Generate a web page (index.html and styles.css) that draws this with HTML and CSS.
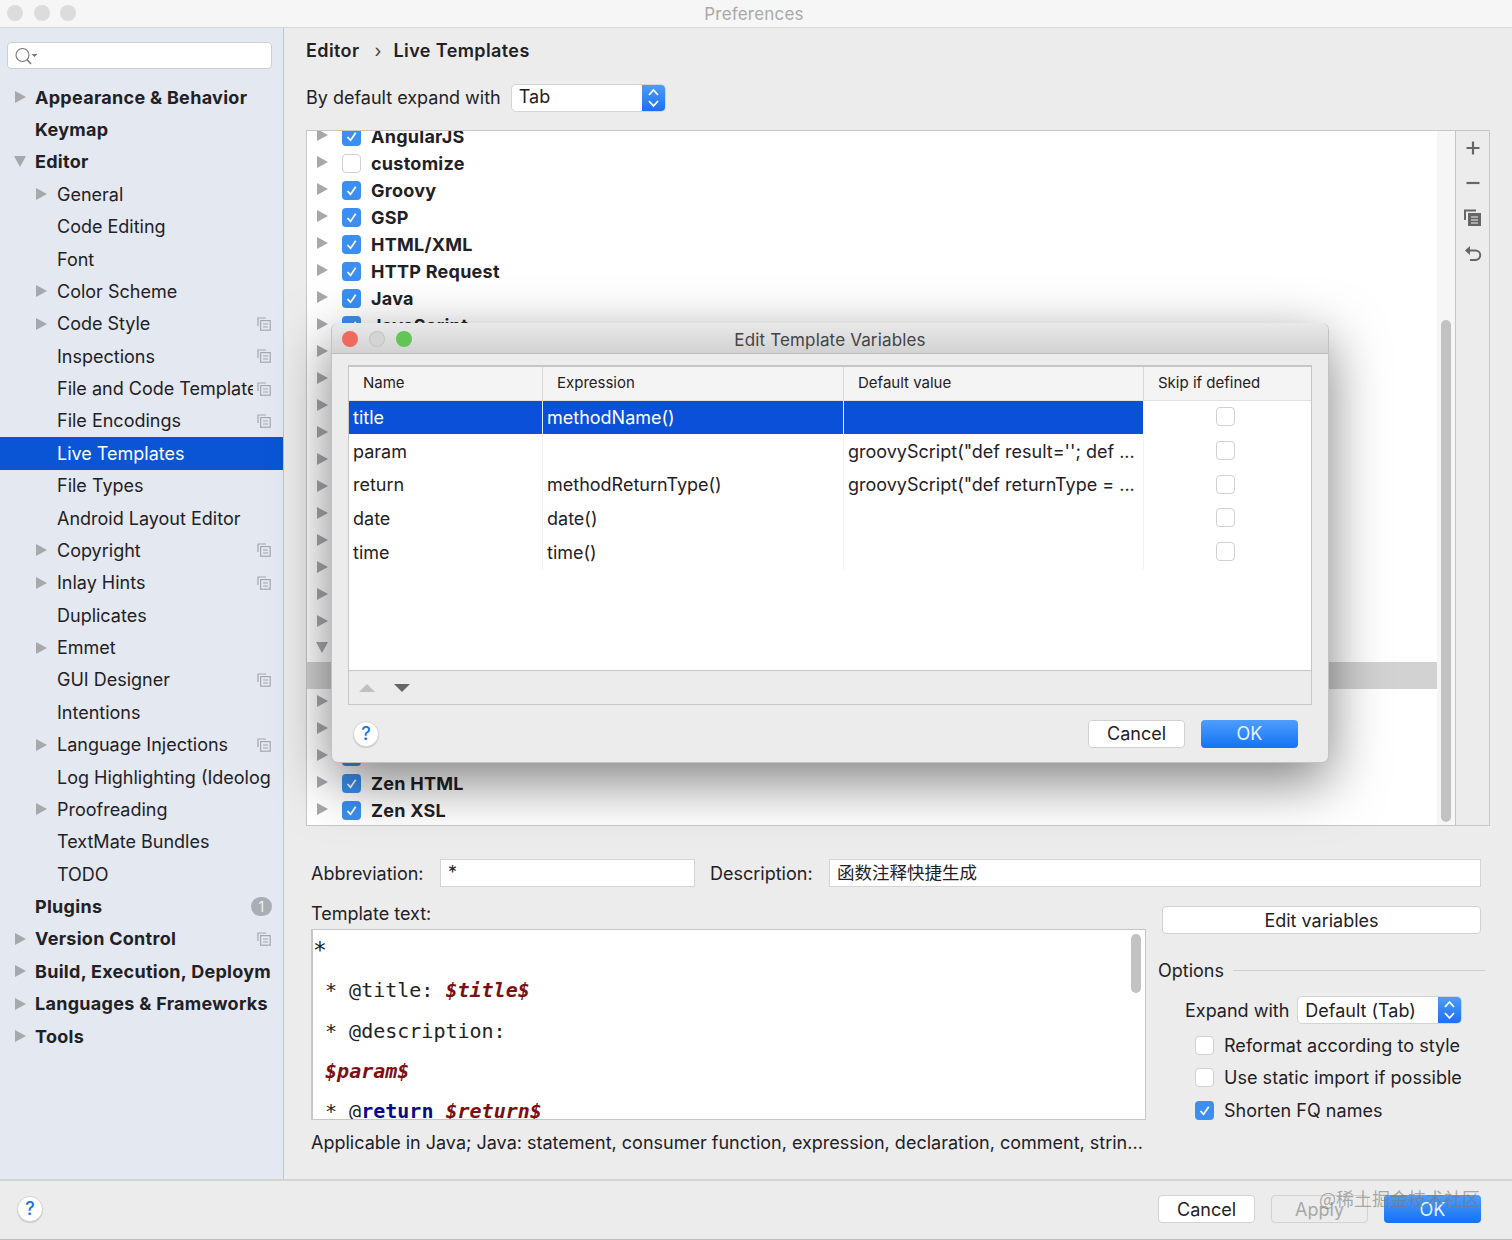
FILE: index.html
```html
<!DOCTYPE html>
<html lang="en">
<head>
<meta charset="UTF-8" />
<title>Preferences</title>
<link rel="stylesheet" href="styles.css">
</head>
<body>

<svg class="defs" width="0" height="0">
  <symbol id="copy" viewBox="0 0 14 14">
    <path d="M1 9V1h8" fill="none" stroke="currentColor" stroke-width="1.2"/>
    <rect x="3.6" y="3.6" width="9.6" height="9.6" fill="none" stroke="currentColor" stroke-width="1.2"/>
    <path d="M6 7h5M6 10h5" stroke="currentColor" stroke-width="1.2"/>
  </symbol>
  <symbol id="check" viewBox="0 0 19 19">
    <path d="M5.5 10l3 3.4 5.2-7.6" fill="none" stroke="#fff" stroke-width="1.8"/>
  </symbol>
  <symbol id="updown" viewBox="0 0 23 28">
    <path d="M7 11l4.5-5 4.5 5M7 17l4.5 5 4.5-5" fill="none" stroke="#fff" stroke-width="1.8"/>
  </symbol>
</svg>

<div class="window">
  <div class="titlebar">
    <div class="lights">
      <span class="light"></span><span class="light"></span><span class="light"></span>
    </div>
    Preferences
  </div>

  <div class="main">
    <!-- left tree -->
    <div class="sidebar">
      <div class="search">
        <svg width="24" height="20" viewBox="0 0 24 20">
          <circle cx="8.500" cy="9" r="6.500" fill="none" stroke="#777" stroke-width="1.100"/>
          <path d="M13 13.500l4 4.500" stroke="#777" stroke-width="1.500"/>
          <path d="M17.500 8h6l-3 3z" fill="#777"/>
        </svg>
      </div>
      <div class="nav">
        <div class="nav-item top"><span class="arrow"></span><span class="nav-label">Appearance &amp; Behavior</span></div>
        <div class="nav-item top"><span class="arrow none"></span><span class="nav-label">Keymap</span></div>
        <div class="nav-item top"><span class="arrow down"></span><span class="nav-label">Editor</span></div>
        <div class="nav-item"><span class="arrow"></span><span class="nav-label">General</span></div>
        <div class="nav-item"><span class="arrow none"></span><span class="nav-label">Code Editing</span></div>
        <div class="nav-item"><span class="arrow none"></span><span class="nav-label">Font</span></div>
        <div class="nav-item"><span class="arrow"></span><span class="nav-label">Color Scheme</span></div>
        <div class="nav-item"><span class="arrow"></span><span class="nav-label">Code Style</span><svg class="copy"><use href="#copy"/></svg></div>
        <div class="nav-item"><span class="arrow none"></span><span class="nav-label">Inspections</span><svg class="copy"><use href="#copy"/></svg></div>
        <div class="nav-item"><span class="arrow none"></span><span class="nav-label">File and Code Templates</span><svg class="copy"><use href="#copy"/></svg></div>
        <div class="nav-item"><span class="arrow none"></span><span class="nav-label">File Encodings</span><svg class="copy"><use href="#copy"/></svg></div>
        <div class="nav-item selected"><span class="arrow none"></span><span class="nav-label">Live Templates</span></div>
        <div class="nav-item"><span class="arrow none"></span><span class="nav-label">File Types</span></div>
        <div class="nav-item"><span class="arrow none"></span><span class="nav-label">Android Layout Editor</span></div>
        <div class="nav-item"><span class="arrow"></span><span class="nav-label">Copyright</span><svg class="copy"><use href="#copy"/></svg></div>
        <div class="nav-item"><span class="arrow"></span><span class="nav-label">Inlay Hints</span><svg class="copy"><use href="#copy"/></svg></div>
        <div class="nav-item"><span class="arrow none"></span><span class="nav-label">Duplicates</span></div>
        <div class="nav-item"><span class="arrow"></span><span class="nav-label">Emmet</span></div>
        <div class="nav-item"><span class="arrow none"></span><span class="nav-label">GUI Designer</span><svg class="copy"><use href="#copy"/></svg></div>
        <div class="nav-item"><span class="arrow none"></span><span class="nav-label">Intentions</span></div>
        <div class="nav-item"><span class="arrow"></span><span class="nav-label">Language Injections</span><svg class="copy"><use href="#copy"/></svg></div>
        <div class="nav-item"><span class="arrow none"></span><span class="nav-label">Log Highlighting (Ideolog)</span></div>
        <div class="nav-item"><span class="arrow"></span><span class="nav-label">Proofreading</span></div>
        <div class="nav-item"><span class="arrow none"></span><span class="nav-label">TextMate Bundles</span></div>
        <div class="nav-item"><span class="arrow none"></span><span class="nav-label">TODO</span></div>
        <div class="nav-item top"><span class="arrow none"></span><span class="nav-label">Plugins</span><span class="badge">1</span></div>
        <div class="nav-item top"><span class="arrow"></span><span class="nav-label">Version Control</span><svg class="copy"><use href="#copy"/></svg></div>
        <div class="nav-item top"><span class="arrow"></span><span class="nav-label">Build, Execution, Deployment</span></div>
        <div class="nav-item top"><span class="arrow"></span><span class="nav-label">Languages &amp; Frameworks</span></div>
        <div class="nav-item top"><span class="arrow"></span><span class="nav-label">Tools</span></div>
      </div>
    </div>

    <div class="content">
      <div class="crumbs"><b>Editor</b><span class="crumb-sep">›</span><b>Live Templates</b></div>

      <div class="expand-row">
        By default expand with
        <div class="select tab-select"><span class="select-text">Tab</span><svg class="select-btn"><use href="#updown"/></svg></div>
      </div>

      <div class="list-box">
        <div class="list">
          <div class="list-rows">
            <div class="row"><span class="arrow"></span><span class="cb on"><svg><use href="#check"/></svg></span>AngularJS</div>
            <div class="row"><span class="arrow"></span><span class="cb"></span>customize</div>
            <div class="row"><span class="arrow"></span><span class="cb on"><svg><use href="#check"/></svg></span>Groovy</div>
            <div class="row"><span class="arrow"></span><span class="cb on"><svg><use href="#check"/></svg></span>GSP</div>
            <div class="row"><span class="arrow"></span><span class="cb on"><svg><use href="#check"/></svg></span>HTML/XML</div>
            <div class="row"><span class="arrow"></span><span class="cb on"><svg><use href="#check"/></svg></span>HTTP Request</div>
            <div class="row"><span class="arrow"></span><span class="cb on"><svg><use href="#check"/></svg></span>Java</div>
            <div class="row"><span class="arrow"></span><span class="cb on"><svg><use href="#check"/></svg></span>JavaScript</div>
            <div class="row"><span class="arrow"></span></div>
            <div class="row"><span class="arrow"></span></div>
            <div class="row"><span class="arrow"></span></div>
            <div class="row"><span class="arrow"></span></div>
            <div class="row"><span class="arrow"></span></div>
            <div class="row"><span class="arrow"></span></div>
            <div class="row"><span class="arrow"></span></div>
            <div class="row"><span class="arrow"></span></div>
            <div class="row"><span class="arrow"></span></div>
            <div class="row"><span class="arrow"></span></div>
            <div class="row"><span class="arrow"></span></div>
            <div class="row"><span class="arrow down"></span></div>
            <div class="row picked"></div>
            <div class="row"><span class="arrow"></span></div>
            <div class="row"><span class="arrow"></span></div>
            <div class="row"><span class="arrow"></span><span class="cb on"><svg><use href="#check"/></svg></span>XML</div>
            <div class="row"><span class="arrow"></span><span class="cb on"><svg><use href="#check"/></svg></span>Zen HTML</div>
            <div class="row"><span class="arrow"></span><span class="cb on"><svg><use href="#check"/></svg></span>Zen XSL</div>
          </div>
          <div class="list-track"><div class="list-thumb"></div></div>
        </div>
        <div class="list-tools">
          <svg width="16" height="16" viewBox="0 0 16 16"><path d="M8 1.500v13M1.500 8h13" stroke="#666" stroke-width="2.200"/></svg>
          <svg width="16" height="16" viewBox="0 0 16 16"><path d="M1.500 8h13" stroke="#666" stroke-width="2.200"/></svg>
          <svg width="18" height="18" viewBox="0 0 18 18"><path d="M1 11V1.500h11" fill="none" stroke="#666" stroke-width="2"/><rect x="4" y="4" width="13" height="13" fill="#666"/><path d="M7 8h7M7 11h7M7 14h7" stroke="#eee" stroke-width="1.200"/></svg>
          <svg width="18" height="18" viewBox="0 0 18 18"><path d="M2 5.500h9.500a4.700 4.700 0 0 1 0 9.500H6" fill="none" stroke="#666" stroke-width="2"/><path d="M6 1L1 5.500 6 10z" fill="#666"/></svg>
        </div>
      </div>

      <div class="abbr-row">
        <label class="abbr-label">Abbreviation:</label>
        <div class="input abbr-input">*</div>
        <label class="desc-label">Description:</label>
        <div class="input desc-input">函数注释快捷生成</div>
      </div>

      <div class="template">
        <div class="template-left">
          <div class="template-label">Template text:</div>
          <div class="editor">
            <div class="code">
              <div class="first">*</div>
              <div> * @title: <i>$title$</i></div>
              <div> * @description:</div>
              <div> <i>$param$</i></div>
              <div> * @<span class="kw">return</span> <i>$return$</i></div>
            </div>
            <div class="editor-thumb"></div>
          </div>
          <div class="applicable">Applicable in Java; Java: statement, consumer function, expression, declaration, comment, strin...</div>
        </div>

        <div class="template-right">
          <button class="button wide">Edit variables</button>
          <div class="options-head">Options<span class="options-line"></span></div>
          <div class="expand-with">
            Expand with
            <div class="select with-select"><span class="select-text">Default (Tab)</span><svg class="select-btn"><use href="#updown"/></svg></div>
          </div>
          <div class="option"><span class="cb"></span>Reformat according to style</div>
          <div class="option"><span class="cb"></span>Use static import if possible</div>
          <div class="option"><span class="cb on"><svg><use href="#check"/></svg></span>Shorten FQ names</div>
        </div>
      </div>
    </div>
  </div>

  <div class="footer">
    <span class="help">?</span>
    <div class="footer-btns">
      <button class="button">Cancel</button>
      <button class="button disabled">Apply</button>
      <button class="button primary">OK</button>
    </div>
  </div>

  <!-- modal over the preferences -->
  <div class="dialog">
    <div class="dialog-title">
      <div class="lights">
        <span class="light red"></span><span class="light"></span><span class="light green"></span>
      </div>
      Edit Template Variables
    </div>
    <div class="vars">
      <div class="vars-row vars-head">
        <div>Name</div><div>Expression</div><div>Default value</div><div>Skip if defined</div>
      </div>
      <div class="vars-row vars-sel">
        <div>title</div><div>methodName()</div><div></div><div class="skip"><span class="cb"></span></div>
      </div>
      <div class="vars-row">
        <div>param</div><div></div><div>groovyScript("def result=''; def ...</div><div class="skip"><span class="cb"></span></div>
      </div>
      <div class="vars-row">
        <div>return</div><div>methodReturnType()</div><div>groovyScript("def returnType = ...</div><div class="skip"><span class="cb"></span></div>
      </div>
      <div class="vars-row">
        <div>date</div><div>date()</div><div></div><div class="skip"><span class="cb"></span></div>
      </div>
      <div class="vars-row">
        <div>time</div><div>time()</div><div></div><div class="skip"><span class="cb"></span></div>
      </div>
      <div class="vars-empty"></div>
      <div class="vars-tools">
        <span class="tri-up"></span><span class="tri-down"></span>
      </div>
    </div>
    <div class="dialog-foot">
      <span class="help">?</span>
      <div class="dialog-btns">
        <button class="button">Cancel</button>
        <button class="button primary">OK</button>
      </div>
    </div>
  </div>

  <div class="watermark">@稀土掘金技术社区</div>
</div>

</body>
</html>
```

FILE: styles.css
```css
html, body {
  margin: 0;
  height: 1240px;
  overflow: hidden;
}
body {
  font-family: Inter, "Noto Sans CJK SC", sans-serif;
  font-size: 18px;
  color: #1f2126;
  background: #ececec;
}
.defs {
  display: block;
  height: 0;
}
.window {
  position: relative;
  width: 1512px;
  height: 1240px;
  display: flex;
  flex-direction: column;
}

/* title bar */
.titlebar {
  position: relative;
  height: 27px;
  flex-shrink: 0;
  background: #f6f6f6;
  border-bottom: 1px solid #d8d8d8;
  color: #a9a9a9;
  font-size: 17px;
  letter-spacing: .2px;
  text-align: center;
  line-height: 28px;
  padding-right: 4px;
}
.lights {
  position: absolute;
  left: 7px;
  top: 5px;
  display: flex;
  gap: 10.5px;
}
.light {
  width: 16px;
  height: 16px;
  border-radius: 50%;
  background: #dcdcdc;
}
.light.red { background: #ee6a5f; }
.light.green { background: #62c554; }

.main {
  flex: 1;
  display: flex;
  min-height: 0;
}

/* sidebar */
.sidebar {
  width: 284px;
  flex-shrink: 0;
  box-sizing: border-box;
  background: #e4e8f0;
  border-right: 1px solid #c4c4c4;
  padding-top: 14px;
}
.search {
  height: 27px;
  margin: 0 11px 0 7px;
  box-sizing: border-box;
  background: #fff;
  border: 1px solid #cdcfd4;
  border-radius: 4px;
  padding: 3px 0 0 6px;
}
.search svg {
  display: block;
}
.nav {
  margin-top: 12px;
}
.nav-item {
  height: 32.38px;
  display: flex;
  align-items: center;
  padding: 0 12px 0 36px;
}
.nav-item.top {
  padding-left: 15px;
  font-weight: 700;
  letter-spacing: .29px;
}
.nav-item .arrow {
  margin-right: 10px;
}
.nav-item.top .arrow {
  margin-right: 9px;
}
.nav-label {
  flex: 1;
  min-width: 0;
  overflow: hidden;
  white-space: nowrap;
}
.nav-item.selected {
  background: #0a55d6;
  color: #fff;
}
.copy {
  width: 14px;
  height: 14px;
  flex-shrink: 0;
  margin-left: 4px;
  color: #a4a7ac;
}
.badge {
  width: 21px;
  height: 19px;
  flex-shrink: 0;
  margin-right: -1px;
  border-radius: 10px;
  background: #a9aeb4;
  color: #eef0f3;
  font-size: 14px;
  font-weight: 400;
  line-height: 19px;
  text-align: center;
}

/* tree triangles */
.arrow {
  width: 0;
  height: 0;
  flex-shrink: 0;
  border-style: solid;
  border-width: 6px 0 6px 11px;
  border-color: transparent transparent transparent #a6a8ab;
}
.arrow.down {
  border-width: 11px 6px 0 6px;
  border-color: #a6a8ab transparent transparent transparent;
  margin-left: -1px;
  margin-right: 9px !important;
}
.arrow.none {
  border-color: transparent;
}

/* right side */
.content {
  flex: 1;
  min-width: 0;
  display: flex;
  flex-direction: column;
  padding-left: 22px;
}
.crumbs {
  height: 28px;
  margin-top: 8px;
  display: flex;
  align-items: center;
}
.crumbs b {
  font-weight: 600;
  letter-spacing: .4px;
}
.crumb-sep {
  margin: 0 12px 0 15px;
  color: #444;
}
.expand-row {
  height: 28px;
  margin-top: 19px;
  display: flex;
  align-items: center;
  gap: 10px;
}
.select {
  height: 28px;
  display: flex;
  align-items: center;
  box-sizing: border-box;
  background: #fff;
  border: 1px solid #d4d4d4;
  border-radius: 5px;
  overflow: hidden;
}
.select-text {
  flex: 1;
  padding: 0 0 2px 7px;
}
.select-btn {
  width: 23px;
  height: 28px;
  flex-shrink: 0;
  background: linear-gradient(#4f9dfb, #1a6ff0);
}
.tab-select {
  width: 155px;
  margin-top: 1px;
}
.with-select { width: 165px; }
.with-select .select-text {
  padding-bottom: 0;
}

.list-box {
  height: 696px;
  width: 1184px;
  margin-top: 19px;
  box-sizing: border-box;
  display: flex;
  background: #fff;
  border: 1px solid #c6c6c6;
}
.list {
  flex: 1;
  position: relative;
  overflow: hidden;
}
.list-rows {
  margin-top: -8px;
}
.row {
  height: 26.96px;
  display: flex;
  align-items: center;
  padding-left: 10px;
  font-weight: 700;
  letter-spacing: .26px;
  width: 1130px;
}
.row .arrow {
  margin-right: 14px;
  position: relative;
  top: -1px;
}
.row .cb {
  margin-right: 10px;
}
.row.picked {
  background: #d2d2d2;
}
.cb {
  width: 19px;
  height: 19px;
  flex-shrink: 0;
  box-sizing: border-box;
  display: block;
  background: #fff;
  border: 1px solid #d0d0d0;
  border-radius: 4px;
}
.cb.on {
  background: #3a8ff0;
  border: none;
}
.cb svg {
  display: block;
  width: 19px;
  height: 19px;
}
.list-track {
  position: absolute;
  right: 0;
  top: 0;
  bottom: 0;
  width: 18px;
  background: #f6f6f6;
}
.list-thumb {
  position: absolute;
  left: 4px;
  top: 189px;
  bottom: 3px;
  width: 10px;
  border-radius: 5px;
  background: #c2c2c2;
}
.list-tools {
  width: 33px;
  flex-shrink: 0;
  background: #ececec;
  border-left: 1px solid #c6c6c6;
  display: flex;
  flex-direction: column;
  align-items: center;
  gap: 18px;
  padding-top: 9px;
}
.list-tools svg {
  display: block;
}
.list-tools svg:nth-child(2) {
  margin-top: 1px;
}

.abbr-row {
  height: 28px;
  margin: 33px 0 0 5px;
  display: flex;
  align-items: center;
}
.input {
  height: 28px;
  box-sizing: border-box;
  background: #fff;
  border: 1px solid #d4d4d4;
  line-height: 26px;
  padding-left: 7px;
}
.abbr-label { width: 129px; }
.abbr-input { width: 255px; }
.desc-label {
  margin-left: 15px;
  width: 119px;
}
.desc-input {
  width: 652px;
  font-size: 17.5px;
}

.template {
  flex: 1;
  display: flex;
  margin-left: 5px;
  min-height: 0;
}
.template-left {
  width: 835px;
  flex-shrink: 0;
}
.template-label {
  height: 26px;
  margin-top: 14px;
  line-height: 26px;
}
.editor {
  position: relative;
  height: 191px;
  margin-top: 2px;
  box-sizing: border-box;
  overflow: hidden;
  background: #fff;
  border: 1px solid #c6c6c6;
  border-left-width: 2px;
}
.code {
  font-family: "DejaVu Sans Mono", monospace;
  font-size: 20px;
  line-height: 40.3px;
  color: #222;
}
.code div {
  white-space: pre;
}
.code .first {
  font-size: 23px;
}
.code i {
  font-weight: 700;
  color: #7d0f12;
}
.kw {
  color: #0a0a8c;
  font-weight: 700;
}
.editor-thumb {
  position: absolute;
  right: 4px;
  top: 4px;
  width: 10px;
  height: 59px;
  border-radius: 5px;
  background: #c2c2c2;
}
.applicable {
  margin-top: 12px;
  line-height: 22px;
  white-space: nowrap;
}
.template-right {
  flex: 1;
  padding-left: 12px;
  margin: 19px 27px 0 0;
}
.button {
  font: inherit;
  color: inherit;
  height: 28px;
  width: 97px;
  padding: 0;
  background: #fff;
  border: 1px solid #d2d2d2;
  border-radius: 4px;
}
.button.wide {
  display: block;
  width: 319px;
  margin-left: 4px;
}
.button.primary {
  background: linear-gradient(#4f9dfb, #1273f5);
  border: none;
  color: #e6f1ff;
}
.button.disabled {
  background: #ececec;
  color: #a8a8a8;
}
.options-head {
  display: flex;
  align-items: center;
  margin-top: 24px;
  height: 24px;
}
.options-line {
  flex: 1;
  height: 1px;
  margin-left: 9px;
  background: #cfcfcf;
}
.expand-with {
  display: flex;
  align-items: center;
  gap: 8px;
  margin: 14px 0 5px 27px;
}
.option {
  height: 32.5px;
  display: flex;
  align-items: center;
  gap: 10px;
  margin-left: 37px;
  letter-spacing: .04px;
}

/* bottom bar */
.footer {
  height: 61px;
  flex-shrink: 0;
  box-sizing: border-box;
  border-top: 2px solid #d4d4d4;
  border-bottom: 1px solid #bdbdbd;
  display: flex;
  align-items: center;
  justify-content: space-between;
  padding: 0 31px 2px 17px;
}
.footer-btns, .dialog-btns {
  display: flex;
  gap: 16px;
}
.help {
  width: 26px;
  height: 26px;
  box-sizing: border-box;
  border: 1px solid #d6d6d6;
  border-radius: 50%;
  background: #fff;
  color: #1473e6;
  font-weight: 500;
  line-height: 24px;
  text-align: center;
  box-shadow: 0 1px 1px rgba(0, 0, 0, .15);
}

/* dialog */
.dialog {
  position: absolute;
  left: 331px;
  top: 323px;
  width: 998px;
  height: 440px;
  box-sizing: border-box;
  display: flex;
  flex-direction: column;
  background: #ececec;
  border: 1px solid #c2c2c2;
  border-top: none;
  border-radius: 7px;
  box-shadow: 0 18px 55px rgba(0, 0, 0, .5);
}
.dialog-title {
  position: relative;
  height: 30px;
  flex-shrink: 0;
  background: linear-gradient(#e9e9e9, #d2d2d2);
  border-bottom: 1px solid #bcbcbc;
  border-radius: 7px 7px 0 0;
  text-align: center;
  line-height: 34px;
  font-size: 17px;
  letter-spacing: .15px;
  color: #444;
}
.dialog-title .lights {
  left: 10px;
  top: 8px;
  gap: 11px;
}
.dialog-title .light:nth-child(2) {
  background: #d4d4d4;
  box-shadow: inset 0 0 0 1px #c4c4c4;
}
.vars {
  height: 340px;
  margin: 11px 16px 0 16px;
  box-sizing: border-box;
  display: flex;
  flex-direction: column;
  background: #fff;
  border: 1px solid #c6c6c6;
  border-top-width: 2px;
}
.vars-row {
  height: 33.7px;
  flex-shrink: 0;
  display: grid;
  grid-template-columns: 194px 301px 300px 1fr;
  line-height: 33px;
}
.vars-row > div {
  padding-left: 4px;
  box-sizing: border-box;
  border-right: 1px solid #f0f0f0;
  white-space: nowrap;
  overflow: hidden;
}
.vars-row > div:last-child {
  border-right: none;
}
.vars-head {
  height: 33px;
  background: #f4f4f4;
  font-size: 15px;
  line-height: 32px;
  border-bottom: 1px solid #e2e2e2;
}
.vars-head > div {
  padding-left: 14px;
  border-right-color: #d8d8d8;
}
.vars-sel {
  height: 32.7px;
  margin-bottom: 1px;
}
.vars-sel > div {
  background: #0a50d8;
  color: #fff;
  border-right-color: #e8eefb;
}
.vars-sel > div:nth-child(3) {
  border-right-color: #fff;
}
.vars-sel > .skip {
  background: #fff;
}
.vars-row > .skip {
  display: flex;
  align-items: center;
  justify-content: center;
  padding: 0 4px 2px 0;
}
.vars-empty {
  flex: 1;
}
.vars-tools {
  height: 34px;
  flex-shrink: 0;
  box-sizing: border-box;
  background: #ececec;
  border-top: 1px solid #c6c6c6;
  display: flex;
  align-items: center;
  gap: 19px;
  padding: 0 0 0 10px;
}
.tri-up {
  border-style: solid;
  border-width: 0 8px 8px 8px;
  border-color: transparent transparent #c0c0c0 transparent;
}
.tri-down {
  border-style: solid;
  border-width: 8px 8px 0 8px;
  border-color: #666 transparent transparent transparent;
}
.dialog-foot {
  flex: 1;
  display: flex;
  align-items: center;
  justify-content: space-between;
  padding: 0 30px 0 21px;
}

.watermark {
  position: absolute;
  right: 32px;
  top: 1185px;
  font-family: "Noto Sans CJK SC", sans-serif;
  font-size: 18px;
  color: rgba(120, 120, 120, .6);
  pointer-events: none;
}
```
